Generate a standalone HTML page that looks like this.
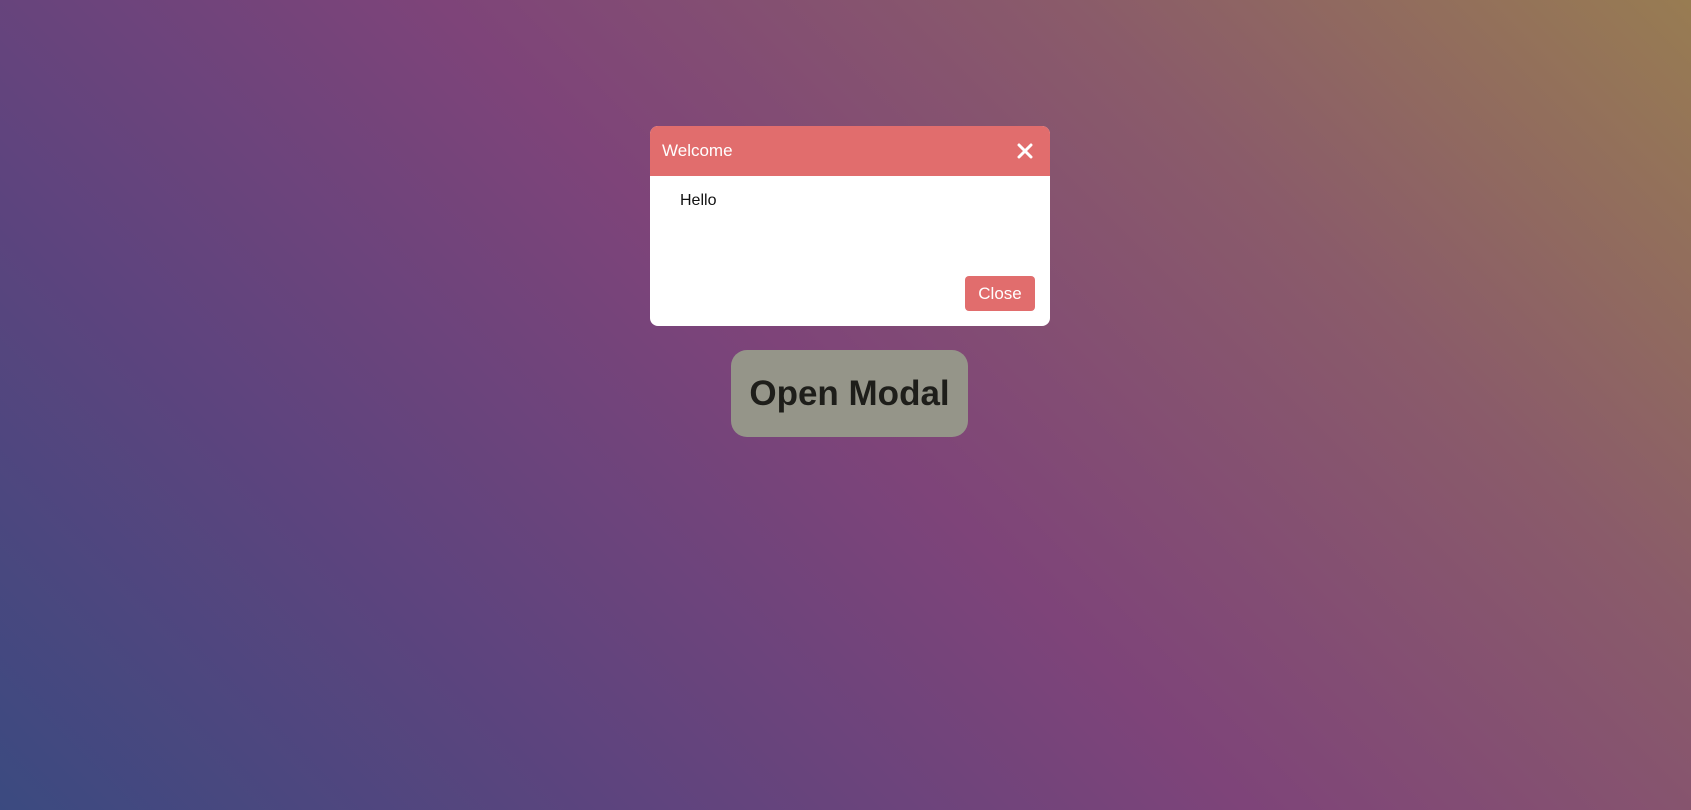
<!DOCTYPE html>
<html><head><style>
html,body{margin:0;padding:0;width:1691px;height:810px;overflow:hidden}
body{background:linear-gradient(45deg,#3b4a80 0%,#5d447e 25%,#7e4479 50%,#8a5b6a 75%,#987c52 100%);font-family:"Liberation Sans",sans-serif;position:relative}
.modal{position:absolute;left:650px;top:126px;width:400px;height:200px;background:#fff;border-radius:8px;overflow:hidden}
.hd{height:50px;background:#e16d6d;color:#fff;font-size:17px;line-height:50px;padding-left:12px;position:relative}
.x{position:absolute;left:367px;top:17px}
.hello{position:absolute;left:30px;top:66px;font-size:16px;color:#111}
.cl{position:absolute;left:315px;top:150px;width:70px;height:35px;background:#e16d6d;color:#fff;border-radius:4px;font-size:17px;line-height:35px;text-align:center}
.open{position:absolute;left:731px;top:350px;width:237px;height:87px;background:#959589;border-radius:16px;color:#1e1e1a;font-weight:bold;font-size:35px;line-height:87px;text-align:center}
</style></head><body>
<div class="modal">
<div class="hd">Welcome<svg class="x" width="16" height="16" viewBox="0 0 16 16"><path d="M2 2L14 14M14 2L2 14" stroke="#fff" stroke-width="3" stroke-linecap="round"/></svg></div>
<div class="hello">Hello</div>
<div class="cl">Close</div>
</div>
<div class="open">Open Modal</div>
</body></html>
